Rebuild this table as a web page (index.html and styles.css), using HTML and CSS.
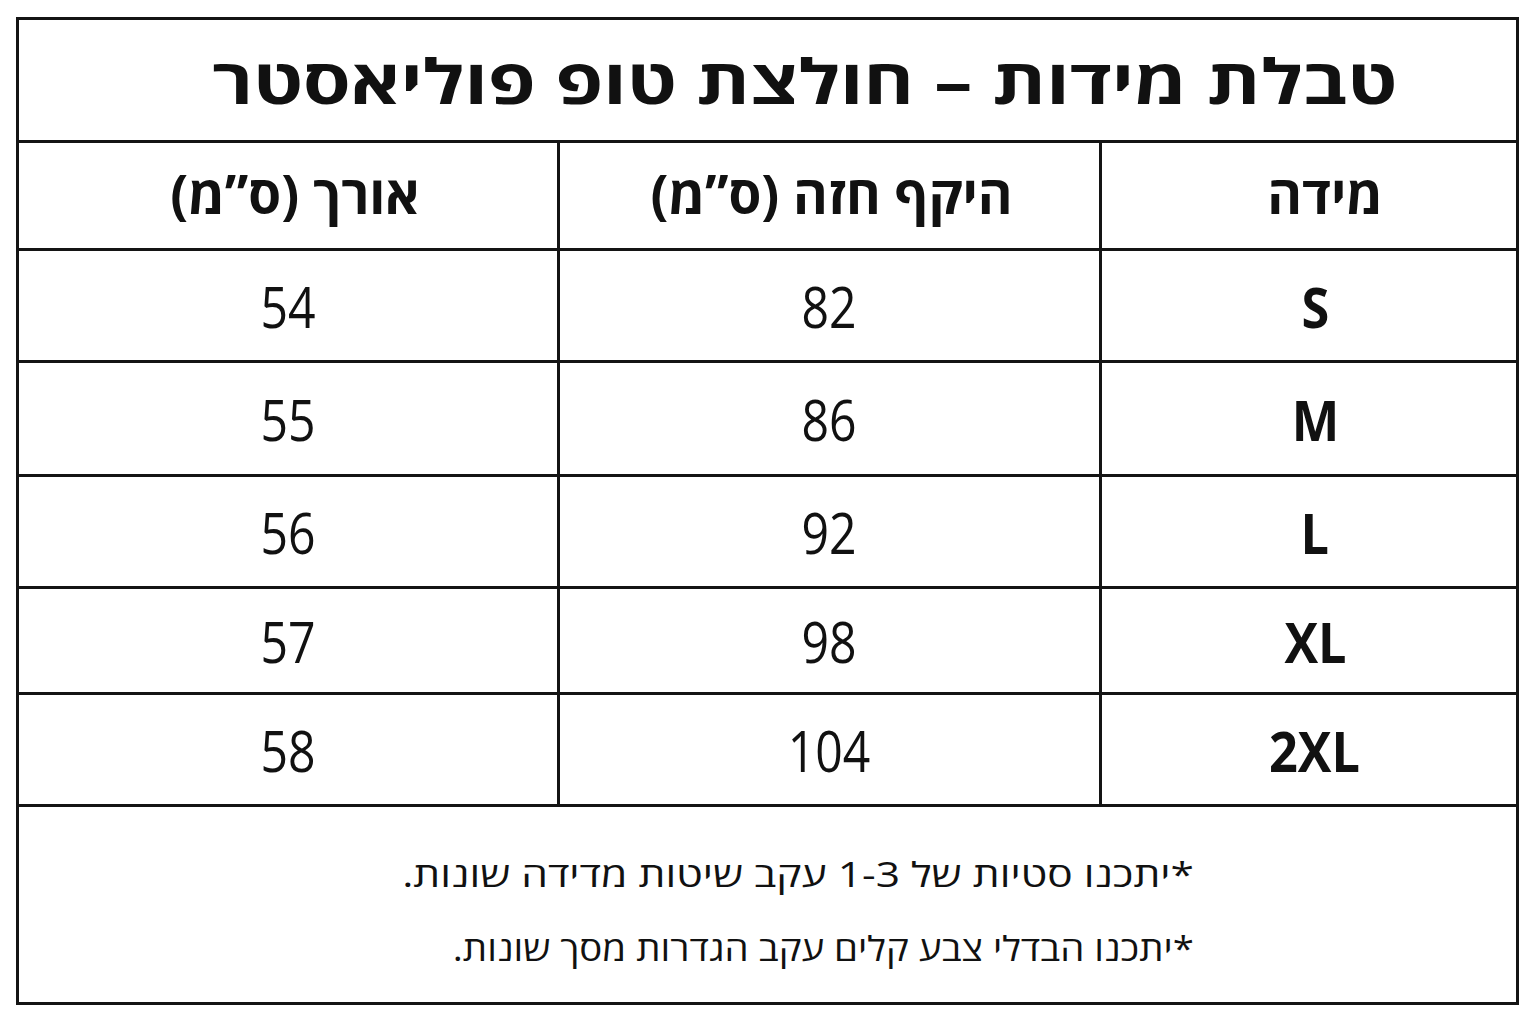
FILE: index.html
```html
<!DOCTYPE html>
<html lang="he">
<head>
<meta charset="utf-8">
<title>טבלת מידות</title>
<link rel="stylesheet" href="styles.css">
</head>
<body>
<table class="sizes" dir="rtl">
  <colgroup>
    <col class="col-size">
    <col class="col-chest">
    <col class="col-length">
  </colgroup>
  <tr class="row-title"><td colspan="3" class="title"><span class="t">טבלת מידות – חולצת טופ פוליאסטר</span></td></tr>
  <tr class="row-head">
    <th class="h1"><span class="t">מידה</span></th>
    <th class="h2"><span class="t">היקף חזה (ס”מ)</span></th>
    <th class="h3"><span class="t">אורך (ס”מ)</span></th>
  </tr>
  <tr class="r1"><td class="size"><span class="t">S</span></td><td class="num"><span class="t">82</span></td><td class="num"><span class="t">54</span></td></tr>
  <tr class="r2"><td class="size"><span class="t">M</span></td><td class="num"><span class="t">86</span></td><td class="num"><span class="t">55</span></td></tr>
  <tr class="r3"><td class="size"><span class="t">L</span></td><td class="num"><span class="t">92</span></td><td class="num"><span class="t">56</span></td></tr>
  <tr class="r4"><td class="size"><span class="t">XL</span></td><td class="num"><span class="t">98</span></td><td class="num"><span class="t">57</span></td></tr>
  <tr class="r5"><td class="size"><span class="t">2XL</span></td><td class="num"><span class="t">104</span></td><td class="num"><span class="t">58</span></td></tr>
  <tr class="row-note">
    <td colspan="3" class="notes">
      <p class="note note-a">*יתכנו סטיות של 1-3 עקב שיטות מדידה שונות.</p>
      <p class="note note-b">*יתכנו הבדלי צבע קלים עקב הגדרות מסך שונות.</p>
    </td>
  </tr>
</table>
</body>
</html>
```

FILE: styles.css
```css
html, body {
  margin: 0;
  padding: 0;
  background: #ffffff;
}
body {
  font-family: "Open Sans", "DejaVu Sans", sans-serif;
  font-stretch: 100%;
  color: #111111;
  padding: 17px 0 0 16px;
}
.sizes {
  border-collapse: collapse;
  width: 1503px;
  table-layout: fixed;
}
.col-size { width: 417px; }
.col-chest { width: 542px; }
.sizes td, .sizes th {
  border: 3px solid #141414;
  padding: 0;
  text-align: center;
  vertical-align: middle;
  color: #111111;
}
.t {
  display: inline-block;
  white-space: nowrap;
}
.row-title { height: 123px; }
.sizes td.title {
  font-size: 62px;
  font-weight: 700;
  padding-left: 75px;
}
.sizes td.title .t { transform: scaleX(1.24); }
.row-head { height: 108px; }
.sizes th {
  font-size: 53px;
  font-weight: 700;
  padding-bottom: 5px;
}
.sizes th.h1 { padding-left: 32px; }
.sizes th.h2 { padding-left: 4px; }
.sizes th.h3 { padding-left: 14px; }
.r1, .r3, .r5 { height: 112px; }
.r2 { height: 114px; }
.r4 { height: 106px; }
.sizes td.num {
  font-size: 56px;
  font-weight: 400;
}
.sizes td.num .t { transform: scaleX(0.86); }
.sizes td.size {
  font-size: 56px;
  font-weight: 700;
  padding-left: 12px;
}
.sizes td.size .t { transform: scaleX(0.9); }
.row-note { height: 198px; }
.sizes td.notes {
  font-size: 34px;
  font-weight: 400;
  text-align: right;
  padding-top: 12px;
  padding-right: 322px;
}
.note {
  margin: 0;
  line-height: 74px;
  white-space: nowrap;
  transform-origin: right center;
}
.note-a { transform: scaleX(1.25); }
.note-b { transform: scaleX(1.13); }
```
